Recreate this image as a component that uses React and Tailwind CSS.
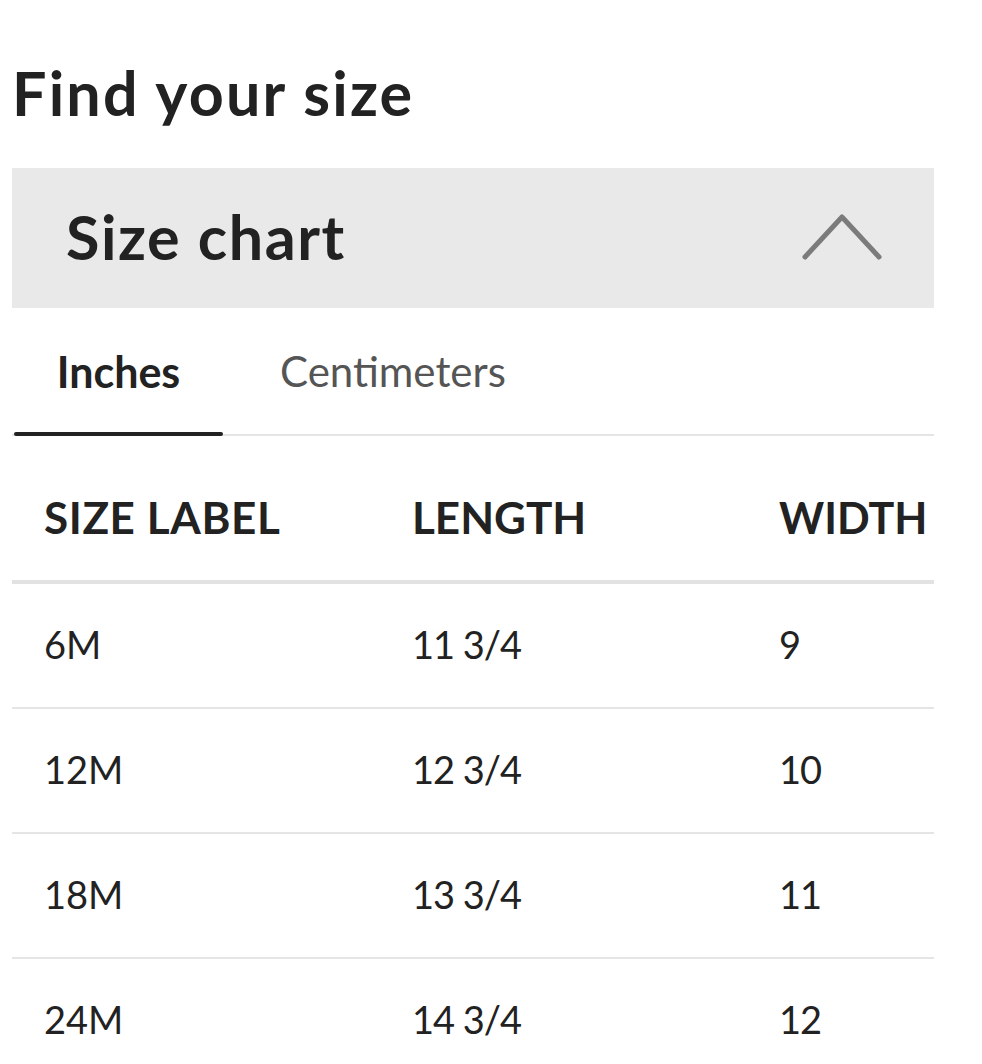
import React from "react";

const rows = [
  ["6M", "11 3/4", "9"],
  ["12M", "12 3/4", "10"],
  ["18M", "13 3/4", "11"],
  ["24M", "14 3/4", "12"],
];

export default function App() {
  return (
    <div className="w-[982px] h-[1064px] overflow-hidden bg-white text-[#222222]" style={{ fontFamily: "Lato, 'Noto Sans', sans-serif" }}>
      <div className="w-[922px] ml-[12px]">
        <div className="h-[168px] pt-[57px]">
          <h1 className="text-[61px] font-bold leading-[72px] tracking-[2.2px]">Find your size</h1>
        </div>
        <div className="h-[140px] bg-[#e9e9e9] flex items-center justify-between pl-[54px] pr-[52px]">
          <span className="text-[61px] font-bold leading-none tracking-[1.6px] -mt-[4px]">Size chart</span>
          <svg width="80" height="50" viewBox="0 0 80 50" className="-mt-[2px]">
            <path d="M3 45 L40 5 L77 45" fill="none" stroke="#7b7b7b" strokeWidth="5" strokeLinecap="round" strokeLinejoin="round" />
          </svg>
        </div>
        <div className="flex h-[128px] border-b-[2px] border-[#e5e5e5] items-stretch">
          <div className="relative w-[209px] ml-[2px] flex items-center justify-center">
            <span className="text-[43px] font-bold leading-none">Inches</span>
            <div className="absolute left-0 right-0 -bottom-[2px] h-[4px] rounded-full bg-[#222222]"></div>
          </div>
          <div className="ml-[57px] flex items-center">
            <span className="text-[42px] leading-none text-[#555555]">Centimeters</span>
          </div>
        </div>
        <div className="grid grid-cols-[368px_367px_1fr] h-[148px] items-center border-b-[4px] border-[#e2e2e2] pl-[32px] pt-[18px]">
          <span className="text-[44px] font-bold leading-none tracking-[0.6px]">SIZE LABEL</span>
          <span className="text-[44px] font-bold leading-none">LENGTH</span>
          <span className="text-[43px] font-bold leading-none">WIDTH</span>
        </div>
        {rows.map((r, i) => (
          <div key={i} className="grid grid-cols-[368px_367px_1fr] h-[125px] items-center border-b-[2px] border-[#e5e5e5] pl-[32px] pb-[4px] text-[38px] leading-none">
            <span>{r[0]}</span>
            <span className="tracking-[-1px]">{r[1]}</span>
            <span className="tracking-[-1px]">{r[2]}</span>
          </div>
        ))}
      </div>
    </div>
  );
}
